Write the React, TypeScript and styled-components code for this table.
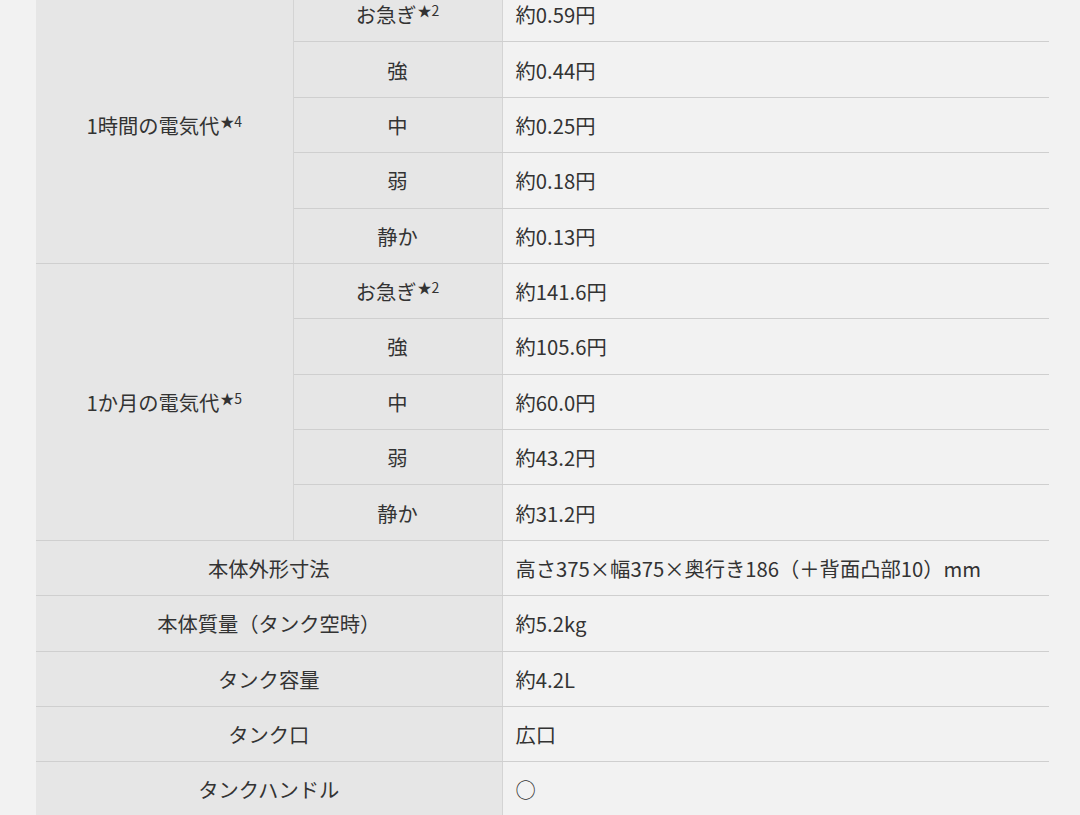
import React from "react";
import styled, { createGlobalStyle } from "styled-components";

const Global = createGlobalStyle`
  html, body {
    margin: 0;
    padding: 0;
    background: #f2f2f2;
    overflow: hidden;
  }
  body {
    font-family: "Noto Sans CJK JP", "Noto Sans", sans-serif;
    color: #333;
  }
`;

const Page = styled.div`
  width: 1080px;
  height: 815px;
  overflow: hidden;
  background: #f2f2f2;
`;

const SpecTable = styled.table`
  margin: -13.4px 0 0 36px;
  width: 1013px;
  border-collapse: collapse;
  table-layout: fixed;
  font-size: 20.3px;
  line-height: 1;
`;

const Row = styled.tr`
  height: 55.38px;
`;

const Head = styled.th`
  background: #e6e6e6;
  font-weight: 400;
  text-align: center;
  vertical-align: middle;
  padding: 0;
  border-bottom: 1px solid #cfcfcf;
  border-right: 1px solid #d4d4d4;
  color: #333;
  white-space: nowrap;
`;

const Value = styled.td`
  background: #f2f2f2;
  text-align: left;
  vertical-align: middle;
  padding: 0 0 0 13px;
  border-bottom: 1px solid #cfcfcf;
  color: #333;
  white-space: nowrap;
`;

const Star = styled.sup`
  font-size: 14px;
  vertical-align: 0;
  position: relative;
  top: -7px;
  margin-left: 1px;
`;

const Col = styled.col<{ $w: number }>`
  width: ${(p) => p.$w}px;
`;

type Group = { label: string; star: string; items: { mode: string; star?: string; value: string }[] };

const groups: Group[] = [
  {
    label: "1時間の電気代",
    star: "4",
    items: [
      { mode: "お急ぎ", star: "2", value: "約0.59円" },
      { mode: "強", value: "約0.44円" },
      { mode: "中", value: "約0.25円" },
      { mode: "弱", value: "約0.18円" },
      { mode: "静か", value: "約0.13円" },
    ],
  },
  {
    label: "1か月の電気代",
    star: "5",
    items: [
      { mode: "お急ぎ", star: "2", value: "約141.6円" },
      { mode: "強", value: "約105.6円" },
      { mode: "中", value: "約60.0円" },
      { mode: "弱", value: "約43.2円" },
      { mode: "静か", value: "約31.2円" },
    ],
  },
];

const singles: { label: string; value: string }[] = [
  { label: "本体外形寸法", value: "高さ375×幅375×奥行き186（＋背面凸部10）mm" },
  { label: "本体質量（タンク空時）", value: "約5.2kg" },
  { label: "タンク容量", value: "約4.2L" },
  { label: "タンク口", value: "広口" },
  { label: "タンクハンドル", value: "○" },
];

export default function App() {
  return (
    <Page>
      <Global />
      <SpecTable>
        <colgroup>
          <Col $w={257} />
          <Col $w={209} />
          <Col $w={547} />
        </colgroup>
        <tbody>
          {groups.map((g) =>
            g.items.map((it, i) => (
              <Row key={g.label + it.mode}>
                {i === 0 && (
                  <Head rowSpan={g.items.length}>
                    {g.label}
                    <Star>★{g.star}</Star>
                  </Head>
                )}
                <Head>
                  {it.mode}
                  {it.star && <Star>★{it.star}</Star>}
                </Head>
                <Value>{it.value}</Value>
              </Row>
            ))
          )}
          {singles.map((s) => (
            <Row key={s.label}>
              <Head colSpan={2}>{s.label}</Head>
              <Value>{s.value}</Value>
            </Row>
          ))}
        </tbody>
      </SpecTable>
    </Page>
  );
}
